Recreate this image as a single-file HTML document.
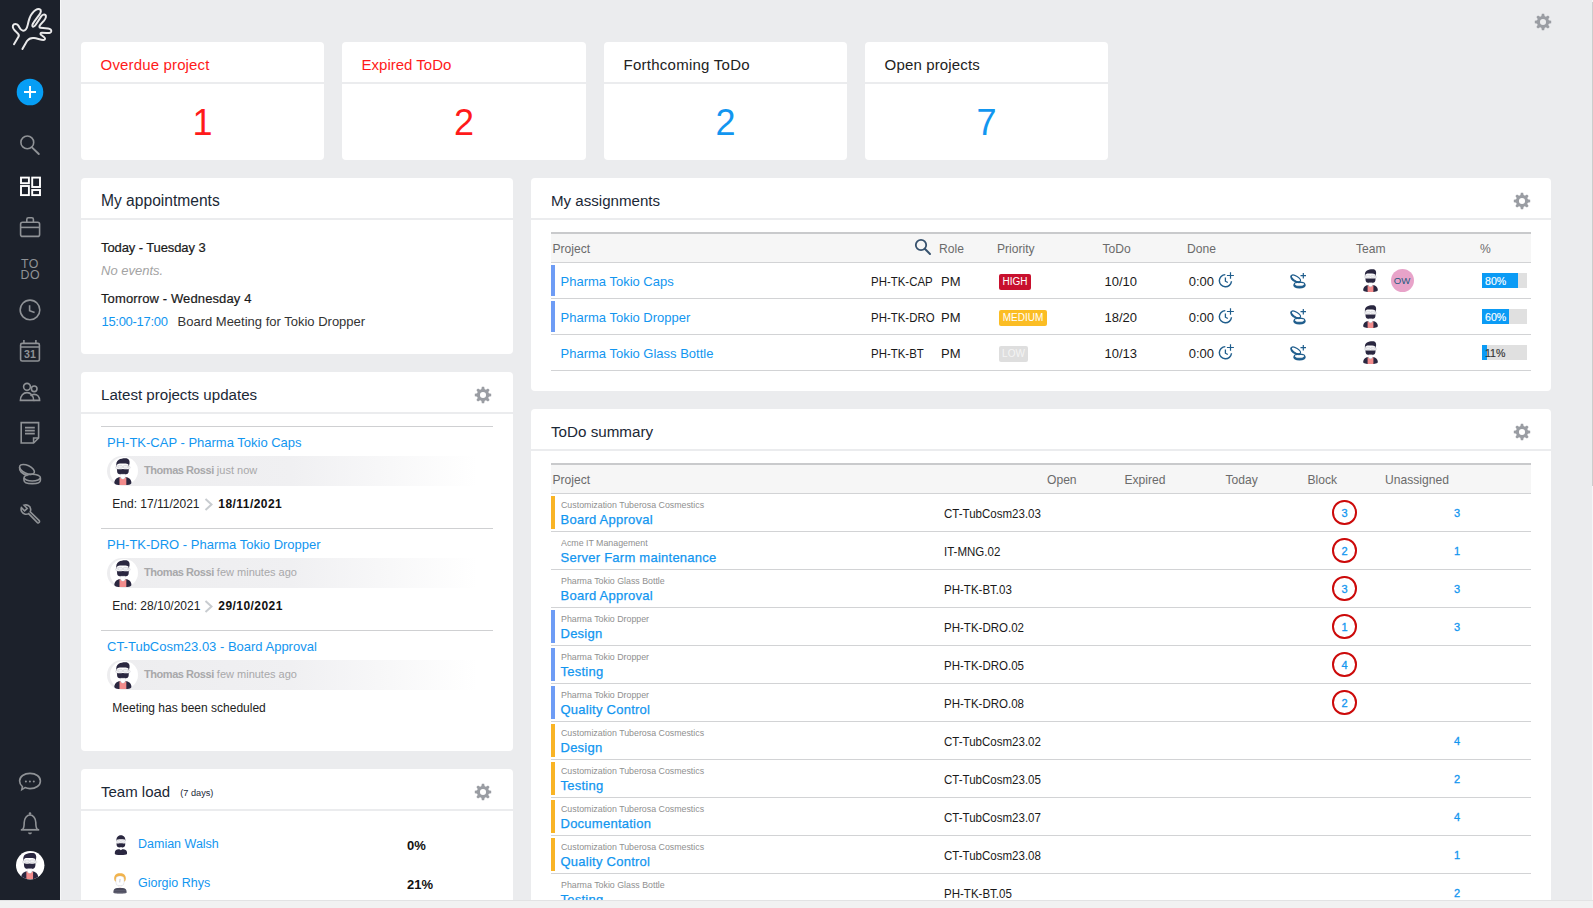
<!DOCTYPE html>
<html><head><meta charset="utf-8"><style>
*{box-sizing:border-box;margin:0;padding:0}
html,body{width:1593px;height:908px;overflow:hidden}
body{background:#ebecee;font-family:"Liberation Sans",sans-serif;color:#222;position:relative}
.abs{position:absolute}
.tx{position:absolute;line-height:1;white-space:nowrap}
#side{position:absolute;left:0;top:0;width:60px;height:900px;background:#1c212b}
#sideline{position:absolute;left:60px;top:0;width:1px;height:900px;background:#f6f7f8}
#bottom{position:absolute;left:0;top:900px;width:1593px;height:8px;background:#f1f2f2;border-top:1px solid #e2e3e4;z-index:5}
#rscroll{position:absolute;left:1592px;top:0;width:1px;height:900px;background:linear-gradient(#f4f4f5 0,#f4f4f5 2px,#cdcdcd 2px,#cdcdcd 486px,#f6f6f7 486px)}
.card{position:absolute;background:#fff;border-radius:4px}
.card .hd{position:absolute;left:0;top:0;right:0;height:42px;border-bottom:2px solid #ebecee}
.red{color:#ff1a1a}
.blue{color:#1296f0}
.dark{color:#222}
.dk{color:#1a1a1a}
.ttl{color:#1b2836}
.th{color:#6b6b6b}
.band{position:absolute;width:370px;height:30px;border-radius:15px 0 0 15px;background:linear-gradient(90deg,#ededef 0%,#f0f0f2 50%,#fff 100%)}
.avc{position:absolute;width:28.3px;height:28.3px;border-radius:50%;background:#fff}
.badge{position:absolute;height:16px;border-radius:2px;font-size:10px;line-height:16px;text-align:center;font-weight:normal}

</style></head><body>
<svg width="0" height="0" style="position:absolute"><symbol id="man" viewBox="0 0 15 23"><circle cx="2.3" cy="8" r="1" fill="#fff" stroke="#cfd0d6" stroke-width="0.5"/><circle cx="12.7" cy="8" r="1" fill="#fff" stroke="#cfd0d6" stroke-width="0.5"/><rect x="2.6" y="3.4" width="9.8" height="9.4" rx="3" fill="#fff" stroke="#d4d5da" stroke-width="0.5"/><rect x="3.4" y="6.2" width="3.7" height="2.4" rx="0.8" fill="#f1f1f4" stroke="#c4c5cc" stroke-width="0.45"/><rect x="7.9" y="6.2" width="3.7" height="2.4" rx="0.8" fill="#f1f1f4" stroke="#c4c5cc" stroke-width="0.45"/><path d="M2.0,7.6 C1.6,4.6 2.1,2.4 4,1.4 C5.8,0.5 8.6,0 10.6,0.3 C12.6,0.7 13.4,2.4 13.1,4.6 C12.9,5.8 12.6,6.6 12.4,7.2 L12.2,5.4 C11.4,4.8 10.2,4.6 9,4.6 L5,4.6 C3.6,4.6 2.6,5.2 2.3,6 Z" fill="#2a2740"/><path d="M2.6,9.2 C3.6,9.8 5.4,9.6 7.5,9.4 C9.6,9.6 11.4,9.8 12.4,9.2 C12.6,11.6 12.2,13 11,13.6 C10,14.1 8.8,14.2 7.5,14.2 C6.2,14.2 5,14.1 4,13.6 C2.8,13 2.4,11.6 2.6,9.2Z" fill="#2a2740"/><path d="M0.2,21 C0.2,18.2 2.6,16.2 4.8,16.2 L10.2,16.2 C12.4,16.2 14.8,18.2 14.8,21 C14.8,22.5 12,23 7.5,23 C3,23 0.2,22.5 0.2,21Z" fill="#2a2740"/><path d="M4.6,16.4 L5.8,16.4 C6.2,17.3 6.8,17.7 7.5,17.7 C8.2,17.7 8.8,17.3 9.2,16.4 L10.4,16.4 L10.4,23 L4.6,23Z" fill="#f28c8c"/><path d="M5.6,13.8 L9.4,13.8 L9.4,16.4 C9,17.3 8.3,17.7 7.5,17.7 C6.7,17.7 6,17.3 5.6,16.4Z" fill="#fff" stroke="#e0e0e5" stroke-width="0.35"/></symbol><symbol id="man2" viewBox="0 0 15 23"><rect x="2.6" y="3.6" width="9.8" height="9.4" rx="3" fill="#fff" stroke="#d4d5da" stroke-width="0.5"/><rect x="3.4" y="6.4" width="3.7" height="2.4" rx="0.8" fill="#f1f1f4" stroke="#c4c5cc" stroke-width="0.45"/><rect x="7.9" y="6.4" width="3.7" height="2.4" rx="0.8" fill="#f1f1f4" stroke="#c4c5cc" stroke-width="0.45"/><path d="M2.3,7.4 C1.9,3 4,0.2 7.5,0.2 C11,0.2 13.1,3 12.7,7.4 L12.3,5.6 C11.6,5 10.4,4.8 9,4.8 L6,4.8 C4.6,4.8 3.4,5 2.7,5.6Z" fill="#2a2740"/><path d="M2.6,9.4 C3.6,10 5.4,9.8 7.5,9.6 C9.6,9.8 11.4,10 12.4,9.4 C12.6,11.8 12.2,13.1 11,13.8 C10,14.3 8.8,14.4 7.5,14.4 C6.2,14.4 5,14.3 4,13.8 C2.8,13.1 2.4,11.8 2.6,9.4Z" fill="#2a2740"/><path d="M0.3,21.2 C0.3,18 2.4,16.4 4.6,16.4 L10.4,16.4 C12.6,16.4 14.7,18 14.7,21.2 C14.7,22.6 12,23 7.5,23 C3,23 0.3,22.6 0.3,21.2Z" fill="#2a2740"/><path d="M6.2,14.4 L8.8,14.4 L8.8,16.4 L7.5,17.4 L6.2,16.4Z" fill="#fff"/></symbol><symbol id="man3" viewBox="0 0 15 23"><path d="M1.2,7.5 C0.6,4.6 1.6,1.6 4,0.7 C6,0 9,0 11,0.7 C13.4,1.6 14.4,4.6 13.8,7.5 C13.4,9 12.6,9.6 12,9.4 L3,9.4 C2.4,9.6 1.6,9 1.2,7.5Z" fill="#f1b34c"/><rect x="3" y="3.4" width="9" height="10.8" rx="3.6" fill="#fff" stroke="#cfd0d6" stroke-width="0.5"/><path d="M7.6,6.6 L7.2,10.4" stroke="#9a9aa4" stroke-width="0.6"/><path d="M3.2,4.2 C4.4,3.2 10.6,3.2 11.8,4.2 L11.4,2.6 L3.6,2.6Z" fill="#f1b34c"/><path d="M6.3,13.8 L8.7,13.8 L8.7,16.6 L6.3,16.6Z" fill="#fff" stroke="#d8d8de" stroke-width="0.4"/><path d="M7,16 L8,16 L7.5,17.2Z" fill="#e0707a"/><path d="M0,21 C0,18 2.2,16.6 4.4,16.6 L10.6,16.6 C12.8,16.6 15,18 15,21 C15,22.6 12,23 7.5,23 C3,23 0,22.6 0,21Z" fill="#4a4a5c"/><path d="M1,19.6 L14,19.6 M0.4,21.4 L14.6,21.4" stroke="#7a7a8a" stroke-width="0.5"/></symbol></svg>
<div id="side"></div><div id="sideline"></div><div id="bottom"></div><div id="rscroll"></div>
<div class="card" style="left:81px;top:42px;width:243px;height:118px"><div class="hd"></div></div>
<div class="tx red" style="left:100.6px;top:56.9px;font-size:15px;letter-spacing:0.15px">Overdue project</div>
<div class="tx red" style="left:81px;width:243px;text-align:center;top:104.5px;font-size:36px">1</div>
<div class="card" style="left:342px;top:42px;width:244px;height:118px"><div class="hd"></div></div>
<div class="tx red" style="left:361.6px;top:56.9px;font-size:15px;letter-spacing:0px">Expired ToDo</div>
<div class="tx red" style="left:342px;width:244px;text-align:center;top:104.5px;font-size:36px">2</div>
<div class="card" style="left:604px;top:42px;width:243px;height:118px"><div class="hd"></div></div>
<div class="tx dark" style="left:623.6px;top:56.9px;font-size:15px;letter-spacing:0.25px">Forthcoming ToDo</div>
<div class="tx blue" style="left:604px;width:243px;text-align:center;top:104.5px;font-size:36px">2</div>
<div class="card" style="left:865px;top:42px;width:243px;height:118px"><div class="hd"></div></div>
<div class="tx dark" style="left:884.6px;top:56.9px;font-size:15px;letter-spacing:0.15px">Open projects</div>
<div class="tx blue" style="left:865px;width:243px;text-align:center;top:104.5px;font-size:36px">7</div>
<div class="card" style="left:81px;top:178px;width:432px;height:176px"><div class="hd"></div></div>
<div class="card" style="left:81px;top:372px;width:432px;height:379px"><div class="hd"></div></div>
<div class="card" style="left:81px;top:769px;width:432px;height:140px"><div class="hd"></div></div>
<div class="card" style="left:531px;top:178px;width:1020px;height:213px"><div class="hd"></div></div>
<div class="card" style="left:531px;top:409px;width:1020px;height:500px"><div class="hd"></div></div>
<div class="tx ttl" style="left:101.0px;top:192.9px;font-size:15.6px;">My appointments</div>
<div class="tx ttl" style="left:101.0px;top:387.3px;font-size:15.1px;">Latest projects updates</div>
<div class="tx ttl" style="left:101.0px;top:784.3px;font-size:15px;">Team load</div>
<div class="tx ttl" style="left:180.2px;top:789.2px;font-size:9.2px;">(7 days)</div>
<div class="tx ttl" style="left:551.0px;top:193.3px;font-size:15.1px;">My assignments</div>
<div class="tx ttl" style="left:551.0px;top:424.2px;font-size:15.2px;">ToDo summary</div>
<svg class="abs" style="left:1532.9px;top:12.3px" width="20" height="20" viewBox="-10 -10 20 20"><g fill="#9a9da3"><circle r="6.1"/><path d="M-1.75,-5.30 L-1.15,-8.20 L1.15,-8.20 L1.75,-5.30 L2.51,-4.99 L4.99,-6.61 L6.61,-4.99 L4.99,-2.51 L5.30,-1.75 L8.20,-1.15 L8.20,1.15 L5.30,1.75 L4.99,2.51 L6.61,4.99 L4.99,6.61 L2.51,4.99 L1.75,5.30 L1.15,8.20 L-1.15,8.20 L-1.75,5.30 L-2.51,4.99 L-4.99,6.61 L-6.61,4.99 L-4.99,2.51 L-5.30,1.75 L-8.20,1.15 L-8.20,-1.15 L-5.30,-1.75 L-4.99,-2.51 L-6.61,-4.99 L-4.99,-6.61 L-2.51,-4.99Z"/></g><circle r="3.05" fill="#ebecee"/></svg>
<svg class="abs" style="left:1512.0px;top:191.4px" width="20" height="20" viewBox="-10 -10 20 20"><g fill="#9a9da3"><circle r="6.1"/><path d="M-1.75,-5.30 L-1.15,-8.20 L1.15,-8.20 L1.75,-5.30 L2.51,-4.99 L4.99,-6.61 L6.61,-4.99 L4.99,-2.51 L5.30,-1.75 L8.20,-1.15 L8.20,1.15 L5.30,1.75 L4.99,2.51 L6.61,4.99 L4.99,6.61 L2.51,4.99 L1.75,5.30 L1.15,8.20 L-1.15,8.20 L-1.75,5.30 L-2.51,4.99 L-4.99,6.61 L-6.61,4.99 L-4.99,2.51 L-5.30,1.75 L-8.20,1.15 L-8.20,-1.15 L-5.30,-1.75 L-4.99,-2.51 L-6.61,-4.99 L-4.99,-6.61 L-2.51,-4.99Z"/></g><circle r="3.05" fill="#fff"/></svg>
<svg class="abs" style="left:473.4px;top:385.4px" width="20" height="20" viewBox="-10 -10 20 20"><g fill="#9a9da3"><circle r="6.1"/><path d="M-1.75,-5.30 L-1.15,-8.20 L1.15,-8.20 L1.75,-5.30 L2.51,-4.99 L4.99,-6.61 L6.61,-4.99 L4.99,-2.51 L5.30,-1.75 L8.20,-1.15 L8.20,1.15 L5.30,1.75 L4.99,2.51 L6.61,4.99 L4.99,6.61 L2.51,4.99 L1.75,5.30 L1.15,8.20 L-1.15,8.20 L-1.75,5.30 L-2.51,4.99 L-4.99,6.61 L-6.61,4.99 L-4.99,2.51 L-5.30,1.75 L-8.20,1.15 L-8.20,-1.15 L-5.30,-1.75 L-4.99,-2.51 L-6.61,-4.99 L-4.99,-6.61 L-2.51,-4.99Z"/></g><circle r="3.05" fill="#fff"/></svg>
<svg class="abs" style="left:473.4px;top:782.4px" width="20" height="20" viewBox="-10 -10 20 20"><g fill="#9a9da3"><circle r="6.1"/><path d="M-1.75,-5.30 L-1.15,-8.20 L1.15,-8.20 L1.75,-5.30 L2.51,-4.99 L4.99,-6.61 L6.61,-4.99 L4.99,-2.51 L5.30,-1.75 L8.20,-1.15 L8.20,1.15 L5.30,1.75 L4.99,2.51 L6.61,4.99 L4.99,6.61 L2.51,4.99 L1.75,5.30 L1.15,8.20 L-1.15,8.20 L-1.75,5.30 L-2.51,4.99 L-4.99,6.61 L-6.61,4.99 L-4.99,2.51 L-5.30,1.75 L-8.20,1.15 L-8.20,-1.15 L-5.30,-1.75 L-4.99,-2.51 L-6.61,-4.99 L-4.99,-6.61 L-2.51,-4.99Z"/></g><circle r="3.05" fill="#fff"/></svg>
<svg class="abs" style="left:1512.0px;top:422.4px" width="20" height="20" viewBox="-10 -10 20 20"><g fill="#9a9da3"><circle r="6.1"/><path d="M-1.75,-5.30 L-1.15,-8.20 L1.15,-8.20 L1.75,-5.30 L2.51,-4.99 L4.99,-6.61 L6.61,-4.99 L4.99,-2.51 L5.30,-1.75 L8.20,-1.15 L8.20,1.15 L5.30,1.75 L4.99,2.51 L6.61,4.99 L4.99,6.61 L2.51,4.99 L1.75,5.30 L1.15,8.20 L-1.15,8.20 L-1.75,5.30 L-2.51,4.99 L-4.99,6.61 L-6.61,4.99 L-4.99,2.51 L-5.30,1.75 L-8.20,1.15 L-8.20,-1.15 L-5.30,-1.75 L-4.99,-2.51 L-6.61,-4.99 L-4.99,-6.61 L-2.51,-4.99Z"/></g><circle r="3.05" fill="#fff"/></svg>
<div class="tx dk" style="left:101.0px;top:241.3px;font-size:13px;-webkit-text-stroke:0.2px #1a1a1a;letter-spacing:-0.1px">Today - Tuesday 3</div>
<div class="tx " style="left:101.0px;top:263.6px;font-size:13px;font-style:italic;color:#a3a3a3">No events.</div>
<div class="tx dk" style="left:101.0px;top:291.8px;font-size:13px;-webkit-text-stroke:0.2px #1a1a1a;letter-spacing:0.12px">Tomorrow - Wednesday 4</div>
<div class="tx blue" style="left:101.5px;top:315.0px;font-size:13px;letter-spacing:-0.3px">15:00-17:00</div>
<div class="tx " style="left:177.5px;top:315.0px;font-size:13px;color:#333">Board Meeting for Tokio Dropper</div>
<div class="abs" style="left:101px;top:426px;width:392px;height:1px;background:#cfd0d2"></div>
<div class="tx blue" style="left:107.0px;top:436.0px;font-size:13px;">PH-TK-CAP - Pharma Tokio Caps</div>
<div class="band" style="left:107px;top:456px"></div>
<div class="avc" style="left:109.8px;top:457px"></div>
<svg class="abs" style="left:114.1px;top:457.6px" width="17.8" height="27.2" viewBox="0 0 15 23"><use href="#man"/></svg>
<div class="tx " style="left:144.0px;top:464.6px;font-size:11px;color:#a8a8aa"><b style="letter-spacing:-0.45px">Thomas Rossi</b> just now</div>
<div class="tx " style="left:112.3px;top:497.6px;font-size:12px;color:#222">End: 17/11/2021</div>
<svg class="abs" style="left:204px;top:498px" width="10" height="13" viewBox="0 0 10 13"><path d="M1.5,1 L7.5,6.5 L1.5,12" fill="none" stroke="#c8ccd0" stroke-width="2"/></svg>
<div class="tx " style="left:218.3px;top:497.6px;font-size:12px;color:#111"><b style="letter-spacing:0.45px">18/11/2021</b></div>
<div class="abs" style="left:101px;top:528px;width:392px;height:1px;background:#cfd0d2"></div>
<div class="tx blue" style="left:107.0px;top:538.0px;font-size:13px;">PH-TK-DRO - Pharma Tokio Dropper</div>
<div class="band" style="left:107px;top:558px"></div>
<div class="avc" style="left:109.8px;top:559px"></div>
<svg class="abs" style="left:114.1px;top:559.6px" width="17.8" height="27.2" viewBox="0 0 15 23"><use href="#man"/></svg>
<div class="tx " style="left:144.0px;top:566.6px;font-size:11px;color:#a8a8aa"><b style="letter-spacing:-0.45px">Thomas Rossi</b> few minutes ago</div>
<div class="tx " style="left:112.3px;top:599.6px;font-size:12px;color:#222">End: 28/10/2021</div>
<svg class="abs" style="left:204px;top:600px" width="10" height="13" viewBox="0 0 10 13"><path d="M1.5,1 L7.5,6.5 L1.5,12" fill="none" stroke="#c8ccd0" stroke-width="2"/></svg>
<div class="tx " style="left:218.3px;top:599.6px;font-size:12px;color:#111"><b style="letter-spacing:0.45px">29/10/2021</b></div>
<div class="abs" style="left:101px;top:630px;width:392px;height:1px;background:#cfd0d2"></div>
<div class="tx blue" style="left:107.0px;top:640.0px;font-size:13px;">CT-TubCosm23.03 - Board Approval</div>
<div class="band" style="left:107px;top:660px"></div>
<div class="avc" style="left:109.8px;top:661px"></div>
<svg class="abs" style="left:114.1px;top:661.6px" width="17.8" height="27.2" viewBox="0 0 15 23"><use href="#man"/></svg>
<div class="tx " style="left:144.0px;top:668.6px;font-size:11px;color:#a8a8aa"><b style="letter-spacing:-0.45px">Thomas Rossi</b> few minutes ago</div>
<div class="tx " style="left:112.3px;top:701.6px;font-size:12px;color:#222">Meeting has been scheduled</div>
<svg class="abs" style="left:113.6px;top:835.4px" width="13.8" height="20" viewBox="0 0 15 23"><use href="#man2"/></svg>
<div class="tx blue" style="left:138.0px;top:837.8px;font-size:12.5px;">Damian Walsh</div>
<div class="tx " style="left:407.0px;top:838.8px;font-size:13px;color:#111"><b>0%</b></div>
<svg class="abs" style="left:113.4px;top:873.4px" width="14" height="20.8" viewBox="0 0 15 23"><use href="#man3"/></svg>
<div class="tx blue" style="left:138.0px;top:876.6px;font-size:12.5px;">Giorgio Rhys</div>
<div class="tx " style="left:407.0px;top:878.0px;font-size:13px;color:#111"><b>21%</b></div>
<div class="abs" style="left:551px;top:232px;width:980px;height:31px;background:#f6f6f6;border-top:2px solid #c9cacc;border-bottom:1px solid #d2d3d5"></div>
<div class="tx th" style="left:552.5px;top:242.9px;font-size:12.1px;">Project</div>
<div class="tx th" style="left:939.0px;top:242.9px;font-size:12.1px;">Role</div>
<div class="tx th" style="left:997.0px;top:242.9px;font-size:12.1px;">Priority</div>
<div class="tx th" style="left:1102.5px;top:242.9px;font-size:12.1px;">ToDo</div>
<div class="tx th" style="left:1187.0px;top:242.9px;font-size:12.1px;">Done</div>
<div class="tx th" style="left:1356.0px;top:242.9px;font-size:12.1px;">Team</div>
<div class="tx th" style="left:1480.0px;top:242.9px;font-size:12.1px;">%</div>
<svg class="abs" style="left:914px;top:238px" width="18" height="18" viewBox="0 0 18 18"><circle cx="7" cy="7" r="5.2" fill="none" stroke="#37526e" stroke-width="1.8"/><path d="M10.8,10.8 L16,16" stroke="#37526e" stroke-width="2" stroke-linecap="round"/></svg>
<div class="abs" style="left:551px;top:298px;width:980px;height:1px;background:#d2d3d5"></div>
<div class="abs" style="left:551px;top:265px;width:4px;height:31px;background:#6e9cf5"></div>
<div class="tx blue" style="left:560.5px;top:274.7px;font-size:13px;">Pharma Tokio Caps</div>
<div class="tx dk" style="left:870.5px;top:274.8px;font-size:13px;;transform:scaleX(0.88);transform-origin:0 0">PH-TK-CAP</div>
<div class="tx dk" style="left:941.0px;top:274.8px;font-size:13px;">PM</div>
<div class="badge" style="left:999px;top:274px;width:32px;background:#c8102e;color:#fff">HIGH</div>
<div class="tx dk" style="left:1104.5px;top:274.6px;font-size:13px;">10/10</div>
<div class="tx dk" style="left:1188.7px;top:274.6px;font-size:13px;">0:00</div>
<svg class="abs" style="left:1214px;top:268px" width="26" height="24" viewBox="0 0 26 24"><g fill="none" stroke="#1f5d8c"><path d="M11.3,6.6 A6.1,6.1 0 1 0 17.5,13.3" stroke-width="1.45"/><path d="M11.4,9.6 L11.4,13.2 L13.8,14.5" stroke-width="1.3"/><path d="M16.5,4.2 L16.5,10.8 M12.9,7.5 L19.9,7.5" stroke-width="1.2"/></g></svg>
<svg class="abs" style="left:1286px;top:268px" width="26" height="24" viewBox="0 0 26 24"><g fill="none" stroke="#1f5d8c"><ellipse cx="9.9" cy="10.4" rx="5.2" ry="2.3" transform="rotate(32 9.9 10.4)" stroke-width="1.1"/><path d="M5.3,7.6 C4.2,9.6 6,12.4 9.4,13.6 C11.6,14.4 13.6,14.5 14.6,14" stroke-width="1.6"/><ellipse cx="13.5" cy="16.2" rx="5.3" ry="2.1" stroke-width="1.1"/><path d="M8.2,16.4 C8.2,18.5 10.6,19.4 13.5,19.4 C16.4,19.4 18.8,18.5 18.8,16.4" stroke-width="2.1"/><path d="M17.3,5 L17.3,10.6 M14.5,7.7 L20,7.7" stroke-width="1.2"/></g></svg>
<svg class="abs" style="left:1363.3px;top:269.0px" width="15" height="23" viewBox="0 0 15 23"><use href="#man"/></svg>
<div class="abs" style="left:1391px;top:269px;width:23px;height:23px;border-radius:50%;background:#e8a3c9"></div>
<div class="tx " style="left:1393.8px;top:276.0px;font-size:9.6px;color:#1e5a80;letter-spacing:0.1px">OW</div>
<div class="abs" style="left:1481.7px;top:273px;width:45px;height:15px;background:#e0e0e0"></div>
<div class="abs" style="left:1481.7px;top:273px;width:36.0px;height:15px;background:#0b9bf5"></div>
<div class="tx " style="left:1485.0px;top:275.8px;font-size:10.6px;color:#fff;-webkit-text-stroke:0.15px #fff">80%</div>
<div class="abs" style="left:551px;top:334px;width:980px;height:1px;background:#d2d3d5"></div>
<div class="abs" style="left:551px;top:301px;width:4px;height:31px;background:#6e9cf5"></div>
<div class="tx blue" style="left:560.5px;top:310.7px;font-size:13px;">Pharma Tokio Dropper</div>
<div class="tx dk" style="left:870.5px;top:310.8px;font-size:13px;;transform:scaleX(0.88);transform-origin:0 0">PH-TK-DRO</div>
<div class="tx dk" style="left:941.0px;top:310.8px;font-size:13px;">PM</div>
<div class="badge" style="left:999px;top:310px;width:48px;background:#fbbd24;color:#fff">MEDIUM</div>
<div class="tx dk" style="left:1104.5px;top:310.6px;font-size:13px;">18/20</div>
<div class="tx dk" style="left:1188.7px;top:310.6px;font-size:13px;">0:00</div>
<svg class="abs" style="left:1214px;top:304px" width="26" height="24" viewBox="0 0 26 24"><g fill="none" stroke="#1f5d8c"><path d="M11.3,6.6 A6.1,6.1 0 1 0 17.5,13.3" stroke-width="1.45"/><path d="M11.4,9.6 L11.4,13.2 L13.8,14.5" stroke-width="1.3"/><path d="M16.5,4.2 L16.5,10.8 M12.9,7.5 L19.9,7.5" stroke-width="1.2"/></g></svg>
<svg class="abs" style="left:1286px;top:304px" width="26" height="24" viewBox="0 0 26 24"><g fill="none" stroke="#1f5d8c"><ellipse cx="9.9" cy="10.4" rx="5.2" ry="2.3" transform="rotate(32 9.9 10.4)" stroke-width="1.1"/><path d="M5.3,7.6 C4.2,9.6 6,12.4 9.4,13.6 C11.6,14.4 13.6,14.5 14.6,14" stroke-width="1.6"/><ellipse cx="13.5" cy="16.2" rx="5.3" ry="2.1" stroke-width="1.1"/><path d="M8.2,16.4 C8.2,18.5 10.6,19.4 13.5,19.4 C16.4,19.4 18.8,18.5 18.8,16.4" stroke-width="2.1"/><path d="M17.3,5 L17.3,10.6 M14.5,7.7 L20,7.7" stroke-width="1.2"/></g></svg>
<svg class="abs" style="left:1363.3px;top:305.0px" width="15" height="23" viewBox="0 0 15 23"><use href="#man"/></svg>
<div class="abs" style="left:1481.7px;top:309px;width:45px;height:15px;background:#e0e0e0"></div>
<div class="abs" style="left:1481.7px;top:309px;width:27.0px;height:15px;background:#0b9bf5"></div>
<div class="tx " style="left:1485.0px;top:311.8px;font-size:10.6px;color:#fff;-webkit-text-stroke:0.15px #fff">60%</div>
<div class="abs" style="left:551px;top:370px;width:980px;height:1px;background:#d2d3d5"></div>
<div class="tx blue" style="left:560.5px;top:346.7px;font-size:13px;">Pharma Tokio Glass Bottle</div>
<div class="tx dk" style="left:870.5px;top:346.8px;font-size:13px;;transform:scaleX(0.88);transform-origin:0 0">PH-TK-BT</div>
<div class="tx dk" style="left:941.0px;top:346.8px;font-size:13px;">PM</div>
<div class="badge" style="left:999px;top:346px;width:29px;background:#dedede;color:#f4f4f4">LOW</div>
<div class="tx dk" style="left:1104.5px;top:346.6px;font-size:13px;">10/13</div>
<div class="tx dk" style="left:1188.7px;top:346.6px;font-size:13px;">0:00</div>
<svg class="abs" style="left:1214px;top:340px" width="26" height="24" viewBox="0 0 26 24"><g fill="none" stroke="#1f5d8c"><path d="M11.3,6.6 A6.1,6.1 0 1 0 17.5,13.3" stroke-width="1.45"/><path d="M11.4,9.6 L11.4,13.2 L13.8,14.5" stroke-width="1.3"/><path d="M16.5,4.2 L16.5,10.8 M12.9,7.5 L19.9,7.5" stroke-width="1.2"/></g></svg>
<svg class="abs" style="left:1286px;top:340px" width="26" height="24" viewBox="0 0 26 24"><g fill="none" stroke="#1f5d8c"><ellipse cx="9.9" cy="10.4" rx="5.2" ry="2.3" transform="rotate(32 9.9 10.4)" stroke-width="1.1"/><path d="M5.3,7.6 C4.2,9.6 6,12.4 9.4,13.6 C11.6,14.4 13.6,14.5 14.6,14" stroke-width="1.6"/><ellipse cx="13.5" cy="16.2" rx="5.3" ry="2.1" stroke-width="1.1"/><path d="M8.2,16.4 C8.2,18.5 10.6,19.4 13.5,19.4 C16.4,19.4 18.8,18.5 18.8,16.4" stroke-width="2.1"/><path d="M17.3,5 L17.3,10.6 M14.5,7.7 L20,7.7" stroke-width="1.2"/></g></svg>
<svg class="abs" style="left:1363.3px;top:341.0px" width="15" height="23" viewBox="0 0 15 23"><use href="#man"/></svg>
<div class="abs" style="left:1481.7px;top:345px;width:45px;height:15px;background:#e0e0e0"></div>
<div class="abs" style="left:1481.7px;top:345px;width:5.0px;height:15px;background:#0b9bf5"></div>
<div class="tx " style="left:1485.0px;top:347.8px;font-size:10.6px;color:#333;-webkit-text-stroke:0.15px #333">11%</div>
<div class="abs" style="left:551px;top:463px;width:980px;height:31px;background:#f6f6f6;border-top:2px solid #c9cacc;border-bottom:1px solid #d2d3d5"></div>
<div class="tx th" style="left:552.5px;top:474.3px;font-size:12.1px;">Project</div>
<div class="tx th" style="left:1047.0px;top:474.3px;font-size:12.1px;">Open</div>
<div class="tx th" style="left:1124.5px;top:474.3px;font-size:12.1px;">Expired</div>
<div class="tx th" style="left:1225.5px;top:474.3px;font-size:12.1px;">Today</div>
<div class="tx th" style="left:1307.5px;top:474.3px;font-size:12.1px;">Block</div>
<div class="tx th" style="left:1385.0px;top:474.3px;font-size:12.1px;">Unassigned</div>
<div class="abs" style="left:551px;top:531px;width:980px;height:1px;background:#d2d3d5"></div>
<div class="abs" style="left:551px;top:496px;width:4px;height:33px;background:#f9b425"></div>
<div class="tx " style="left:560.6px;top:499.6px;font-size:9.8px;color:#8f8f8f;transform:scaleX(0.9);transform-origin:0 0">Customization Tuberosa Cosmestics</div>
<div class="tx blue" style="left:560.5px;top:512.5px;font-size:13px;-webkit-text-stroke:0.25px #1296f0;letter-spacing:0.25px">Board Approval</div>
<div class="tx dk" style="left:944.3px;top:507.8px;font-size:12.4px;;transform:scaleX(0.93);transform-origin:0 0">CT-TubCosm23.03</div>
<div class="abs" style="left:1332.2px;top:500.2px;width:24.5px;height:24.5px;border-radius:50%;border:2px solid #cc0a0a"></div>
<div class="tx blue" style="left:1332.2px;width:24.5px;text-align:center;top:507.5px;font-size:11px;-webkit-text-stroke:0.3px #1296f0">3</div>
<div class="tx blue" style="left:1447px;width:20px;text-align:center;top:507.5px;font-size:11px;-webkit-text-stroke:0.3px #1296f0">3</div>
<div class="abs" style="left:551px;top:569px;width:980px;height:1px;background:#d2d3d5"></div>
<div class="tx " style="left:560.6px;top:537.6px;font-size:9.8px;color:#8f8f8f;transform:scaleX(0.9);transform-origin:0 0">Acme IT Management</div>
<div class="tx blue" style="left:560.5px;top:550.5px;font-size:13px;-webkit-text-stroke:0.25px #1296f0;letter-spacing:0.25px">Server Farm maintenance</div>
<div class="tx dk" style="left:944.3px;top:545.8px;font-size:12.4px;;transform:scaleX(0.93);transform-origin:0 0">IT-MNG.02</div>
<div class="abs" style="left:1332.2px;top:538.2px;width:24.5px;height:24.5px;border-radius:50%;border:2px solid #cc0a0a"></div>
<div class="tx blue" style="left:1332.2px;width:24.5px;text-align:center;top:545.5px;font-size:11px;-webkit-text-stroke:0.3px #1296f0">2</div>
<div class="tx blue" style="left:1447px;width:20px;text-align:center;top:545.5px;font-size:11px;-webkit-text-stroke:0.3px #1296f0">1</div>
<div class="abs" style="left:551px;top:607px;width:980px;height:1px;background:#d2d3d5"></div>
<div class="tx " style="left:560.6px;top:575.6px;font-size:9.8px;color:#8f8f8f;transform:scaleX(0.9);transform-origin:0 0">Pharma Tokio Glass Bottle</div>
<div class="tx blue" style="left:560.5px;top:588.5px;font-size:13px;-webkit-text-stroke:0.25px #1296f0;letter-spacing:0.25px">Board Approval</div>
<div class="tx dk" style="left:944.3px;top:583.8px;font-size:12.4px;;transform:scaleX(0.93);transform-origin:0 0">PH-TK-BT.03</div>
<div class="abs" style="left:1332.2px;top:576.2px;width:24.5px;height:24.5px;border-radius:50%;border:2px solid #cc0a0a"></div>
<div class="tx blue" style="left:1332.2px;width:24.5px;text-align:center;top:583.5px;font-size:11px;-webkit-text-stroke:0.3px #1296f0">3</div>
<div class="tx blue" style="left:1447px;width:20px;text-align:center;top:583.5px;font-size:11px;-webkit-text-stroke:0.3px #1296f0">3</div>
<div class="abs" style="left:551px;top:645px;width:980px;height:1px;background:#d2d3d5"></div>
<div class="abs" style="left:551px;top:610px;width:4px;height:33px;background:#6e9cf5"></div>
<div class="tx " style="left:560.6px;top:613.6px;font-size:9.8px;color:#8f8f8f;transform:scaleX(0.9);transform-origin:0 0">Pharma Tokio Dropper</div>
<div class="tx blue" style="left:560.5px;top:626.5px;font-size:13px;-webkit-text-stroke:0.25px #1296f0;letter-spacing:0.25px">Design</div>
<div class="tx dk" style="left:944.3px;top:621.8px;font-size:12.4px;;transform:scaleX(0.93);transform-origin:0 0">PH-TK-DRO.02</div>
<div class="abs" style="left:1332.2px;top:614.2px;width:24.5px;height:24.5px;border-radius:50%;border:2px solid #cc0a0a"></div>
<div class="tx blue" style="left:1332.2px;width:24.5px;text-align:center;top:621.5px;font-size:11px;-webkit-text-stroke:0.3px #1296f0">1</div>
<div class="tx blue" style="left:1447px;width:20px;text-align:center;top:621.5px;font-size:11px;-webkit-text-stroke:0.3px #1296f0">3</div>
<div class="abs" style="left:551px;top:683px;width:980px;height:1px;background:#d2d3d5"></div>
<div class="abs" style="left:551px;top:648px;width:4px;height:33px;background:#6e9cf5"></div>
<div class="tx " style="left:560.6px;top:651.6px;font-size:9.8px;color:#8f8f8f;transform:scaleX(0.9);transform-origin:0 0">Pharma Tokio Dropper</div>
<div class="tx blue" style="left:560.5px;top:664.5px;font-size:13px;-webkit-text-stroke:0.25px #1296f0;letter-spacing:0.25px">Testing</div>
<div class="tx dk" style="left:944.3px;top:659.8px;font-size:12.4px;;transform:scaleX(0.93);transform-origin:0 0">PH-TK-DRO.05</div>
<div class="abs" style="left:1332.2px;top:652.2px;width:24.5px;height:24.5px;border-radius:50%;border:2px solid #cc0a0a"></div>
<div class="tx blue" style="left:1332.2px;width:24.5px;text-align:center;top:659.5px;font-size:11px;-webkit-text-stroke:0.3px #1296f0">4</div>
<div class="abs" style="left:551px;top:721px;width:980px;height:1px;background:#d2d3d5"></div>
<div class="abs" style="left:551px;top:686px;width:4px;height:33px;background:#6e9cf5"></div>
<div class="tx " style="left:560.6px;top:689.6px;font-size:9.8px;color:#8f8f8f;transform:scaleX(0.9);transform-origin:0 0">Pharma Tokio Dropper</div>
<div class="tx blue" style="left:560.5px;top:702.5px;font-size:13px;-webkit-text-stroke:0.25px #1296f0;letter-spacing:0.25px">Quality Control</div>
<div class="tx dk" style="left:944.3px;top:697.8px;font-size:12.4px;;transform:scaleX(0.93);transform-origin:0 0">PH-TK-DRO.08</div>
<div class="abs" style="left:1332.2px;top:690.2px;width:24.5px;height:24.5px;border-radius:50%;border:2px solid #cc0a0a"></div>
<div class="tx blue" style="left:1332.2px;width:24.5px;text-align:center;top:697.5px;font-size:11px;-webkit-text-stroke:0.3px #1296f0">2</div>
<div class="abs" style="left:551px;top:759px;width:980px;height:1px;background:#d2d3d5"></div>
<div class="abs" style="left:551px;top:724px;width:4px;height:33px;background:#f9b425"></div>
<div class="tx " style="left:560.6px;top:727.6px;font-size:9.8px;color:#8f8f8f;transform:scaleX(0.9);transform-origin:0 0">Customization Tuberosa Cosmestics</div>
<div class="tx blue" style="left:560.5px;top:740.5px;font-size:13px;-webkit-text-stroke:0.25px #1296f0;letter-spacing:0.25px">Design</div>
<div class="tx dk" style="left:944.3px;top:735.8px;font-size:12.4px;;transform:scaleX(0.93);transform-origin:0 0">CT-TubCosm23.02</div>
<div class="tx blue" style="left:1447px;width:20px;text-align:center;top:735.5px;font-size:11px;-webkit-text-stroke:0.3px #1296f0">4</div>
<div class="abs" style="left:551px;top:797px;width:980px;height:1px;background:#d2d3d5"></div>
<div class="abs" style="left:551px;top:762px;width:4px;height:33px;background:#f9b425"></div>
<div class="tx " style="left:560.6px;top:765.6px;font-size:9.8px;color:#8f8f8f;transform:scaleX(0.9);transform-origin:0 0">Customization Tuberosa Cosmestics</div>
<div class="tx blue" style="left:560.5px;top:778.5px;font-size:13px;-webkit-text-stroke:0.25px #1296f0;letter-spacing:0.25px">Testing</div>
<div class="tx dk" style="left:944.3px;top:773.8px;font-size:12.4px;;transform:scaleX(0.93);transform-origin:0 0">CT-TubCosm23.05</div>
<div class="tx blue" style="left:1447px;width:20px;text-align:center;top:773.5px;font-size:11px;-webkit-text-stroke:0.3px #1296f0">2</div>
<div class="abs" style="left:551px;top:835px;width:980px;height:1px;background:#d2d3d5"></div>
<div class="abs" style="left:551px;top:800px;width:4px;height:33px;background:#f9b425"></div>
<div class="tx " style="left:560.6px;top:803.6px;font-size:9.8px;color:#8f8f8f;transform:scaleX(0.9);transform-origin:0 0">Customization Tuberosa Cosmestics</div>
<div class="tx blue" style="left:560.5px;top:816.5px;font-size:13px;-webkit-text-stroke:0.25px #1296f0;letter-spacing:0.25px">Documentation</div>
<div class="tx dk" style="left:944.3px;top:811.8px;font-size:12.4px;;transform:scaleX(0.93);transform-origin:0 0">CT-TubCosm23.07</div>
<div class="tx blue" style="left:1447px;width:20px;text-align:center;top:811.5px;font-size:11px;-webkit-text-stroke:0.3px #1296f0">4</div>
<div class="abs" style="left:551px;top:873px;width:980px;height:1px;background:#d2d3d5"></div>
<div class="abs" style="left:551px;top:838px;width:4px;height:33px;background:#f9b425"></div>
<div class="tx " style="left:560.6px;top:841.6px;font-size:9.8px;color:#8f8f8f;transform:scaleX(0.9);transform-origin:0 0">Customization Tuberosa Cosmestics</div>
<div class="tx blue" style="left:560.5px;top:854.5px;font-size:13px;-webkit-text-stroke:0.25px #1296f0;letter-spacing:0.25px">Quality Control</div>
<div class="tx dk" style="left:944.3px;top:849.8px;font-size:12.4px;;transform:scaleX(0.93);transform-origin:0 0">CT-TubCosm23.08</div>
<div class="tx blue" style="left:1447px;width:20px;text-align:center;top:849.5px;font-size:11px;-webkit-text-stroke:0.3px #1296f0">1</div>
<div class="abs" style="left:551px;top:911px;width:980px;height:1px;background:#d2d3d5"></div>
<div class="tx " style="left:560.6px;top:879.6px;font-size:9.8px;color:#8f8f8f;transform:scaleX(0.9);transform-origin:0 0">Pharma Tokio Glass Bottle</div>
<div class="tx blue" style="left:560.5px;top:892.5px;font-size:13px;-webkit-text-stroke:0.25px #1296f0;letter-spacing:0.25px">Testing</div>
<div class="tx dk" style="left:944.3px;top:887.8px;font-size:12.4px;;transform:scaleX(0.93);transform-origin:0 0">PH-TK-BT.05</div>
<div class="tx blue" style="left:1447px;width:20px;text-align:center;top:887.5px;font-size:11px;-webkit-text-stroke:0.3px #1296f0">2</div>
<svg class="abs" style="left:0;top:0" width="60" height="900" viewBox="0 0 60 900">
<!-- logo -->
<path d="M14,44.2 L18.6,36.6 C19.3,35.2 18.4,33.6 16.6,32.2 C13.6,29.8 12.4,27.2 13,25.4 C13.8,23.4 16.8,23.4 18.2,25.4 C19.6,27.4 20.2,30.2 22.6,30.6 C25.4,31 27,28.4 27.8,24.6 C28.6,20.6 29.6,16.6 32,13.6 C34.4,10.6 37.6,8.6 39.6,9.2 C41.4,9.8 41.2,12.2 39.4,14.6 L34.4,21.4 C32.6,23.8 31.6,26 32.8,26.6 C34,27.2 35.6,25.2 37.2,22.6 L41,16.6 C42.6,14.4 44.4,14 45.4,15 C46.4,16.2 45.6,18.6 44,20.6 L40.6,24.4 C39,26.2 39,27.6 40.6,27.8 L48,28.6 C50.4,28.9 51.6,29.8 51.2,31.4 C50.8,32.8 49,33.2 46.6,33 L42,32.8 C40.4,32.8 40,33.8 41,34.8 L44.2,37.2 C45.6,38.4 45.2,40 43.4,40 C40.8,40 37.2,38.4 34,38 C30.8,37.6 28.8,38.6 27,41 L22.4,49" fill="none" stroke="#e9e9ea" stroke-width="2" stroke-linecap="round" stroke-linejoin="round"/>
<!-- plus -->
<circle cx="30" cy="92" r="13.3" fill="#069ef5"/>
<path d="M24,92 L36,92 M30,86 L30,98" stroke="#fff" stroke-width="2"/>
<g fill="none" stroke="#8f9296" stroke-width="1.6">
<!-- search -->
<circle cx="27.3" cy="142.4" r="6.4"/>
<path d="M32.2,147.6 L38.8,154" stroke-width="1.9" stroke-linecap="round"/>
<!-- briefcase -->
<rect x="20.6" y="222.2" width="19" height="14.2" rx="2"/>
<path d="M20.6,227.4 L39.6,227.4"/>
<path d="M26.8,222 L26.8,219.4 C26.8,218.4 27.4,217.8 28.4,217.8 L31.8,217.8 C32.8,217.8 33.4,218.4 33.4,219.4 L33.4,222"/>
<!-- clock -->
<circle cx="30" cy="309.9" r="9.8"/>
<path d="M29.6,305.2 L29.6,310.8 L34.6,312.6"/>
<!-- calendar -->
<rect x="20.6" y="343.4" width="18.8" height="17.6" rx="1.5"/>
<path d="M20.6,347 L39.4,347 M23.9,340 L23.9,344 M35.9,340 L35.9,344"/>
<!-- people -->
<circle cx="27" cy="386.8" r="3.4"/>
<circle cx="34.2" cy="388.8" r="2.8"/>
<path d="M20.4,400.4 C20.4,395.6 23.4,392.6 27,392.6 C30.6,392.6 33.6,395.6 33.6,400.4 Z"/>
<path d="M33.6,400.4 L39.6,400.4 C39.6,396.8 37.4,394.4 34.2,394.4 C32.6,394.4 31.4,395 30.6,396"/>
<!-- document -->
<path d="M21.2,422.6 L38.6,422.6 L38.6,438 L33.6,443 L21.2,443 Z"/>
<path d="M33.6,443 L33.6,438 L38.6,438"/>
<path d="M25,427.6 L34.8,427.6 M25,430.6 L34.8,430.6 M25,433.6 L34.8,433.6"/>
<!-- coins -->
<ellipse cx="27" cy="469.4" rx="8" ry="4" transform="rotate(25 27 469.4)"/>
<path d="M19.6,467.4 C19,470.6 22,474 27.4,475.4"/>
<ellipse cx="32.2" cy="477.6" rx="8.2" ry="3.4"/>
<path d="M24,478 L24,480.2 C24,482.2 27.6,483.6 32.2,483.6 C36.8,483.6 40.4,482.2 40.4,480.2 L40.4,478"/>
<!-- wrench -->
<path d="M21.4,507.6 L24.6,510.8 L27.2,508.4 L24,505.2 C26.8,504.2 30.2,505.6 30.6,508.8 C30.8,510 30.6,511 30.2,511.8 L39,520.4 C40.2,521.6 38.8,523.8 37.4,522.6 L28.6,513.6 C27.6,514.2 26.4,514.4 25.2,514.2 C22,513.6 20.4,510.4 21.4,507.6 Z"/>
<!-- chat -->
<path d="M22.4,786.6 C20.4,785 19.6,783.2 19.6,781 C19.6,776.4 24.2,773.4 30,773.4 C35.8,773.4 40.4,776.4 40.4,781 C40.4,785.6 35.8,788.6 30,788.6 C28,788.6 26.4,788.2 25,787.6 L21.8,789.6 Z"/>
<!-- bell -->
<path d="M22.6,829.6 C23.8,828.4 24.2,826.4 24.2,822.6 C24.2,818.2 26.8,815 30,815 C33.2,815 35.8,818.2 35.8,822.6 C35.8,826.4 36.2,828.4 37.4,829.6"/>
<path d="M20.8,829.8 L39.2,829.8" stroke-width="1.8"/>
</g>
<g fill="#8f9296">
<circle cx="25.9" cy="781.5" r="1"/><circle cx="29.9" cy="781.5" r="1"/><circle cx="33.8" cy="781.5" r="1"/>
<circle cx="30" cy="813.6" r="1.3"/>
<path d="M28,832.4 L32,832.4 C32,833.6 31,834.2 30,834.2 C29,834.2 28,833.6 28,832.4Z"/>
</g>
<text x="30" y="267.8" text-anchor="middle" font-family="Liberation Sans" font-size="12.4" fill="#8f9296" letter-spacing="0.6">TO</text>
<text x="30.4" y="279" text-anchor="middle" font-family="Liberation Sans" font-size="12.4" fill="#8f9296" letter-spacing="0.6">DO</text>
<text x="30" y="358.4" text-anchor="middle" font-family="Liberation Sans" font-weight="bold" font-size="10.6" fill="#8f9296">31</text>
<g fill="none" stroke="#fff" stroke-width="1.9">
<rect x="21" y="177.6" width="7.9" height="5.6"/>
<rect x="32.2" y="177.6" width="7.8" height="9.4"/>
<rect x="21" y="186" width="7.9" height="9.1"/>
<rect x="32.2" y="190" width="7.8" height="5.1"/>
</g>
<circle cx="30.2" cy="865.2" r="14.2" fill="#fff"/>
<clipPath id="avclip"><circle cx="30.2" cy="865.2" r="14.2"/></clipPath><g clip-path="url(#avclip)"><svg x="21" y="852.3" width="17.4" height="27.4" viewBox="0 0 15 23"><use href="#man"/></svg></g>
</svg>
</body></html>
